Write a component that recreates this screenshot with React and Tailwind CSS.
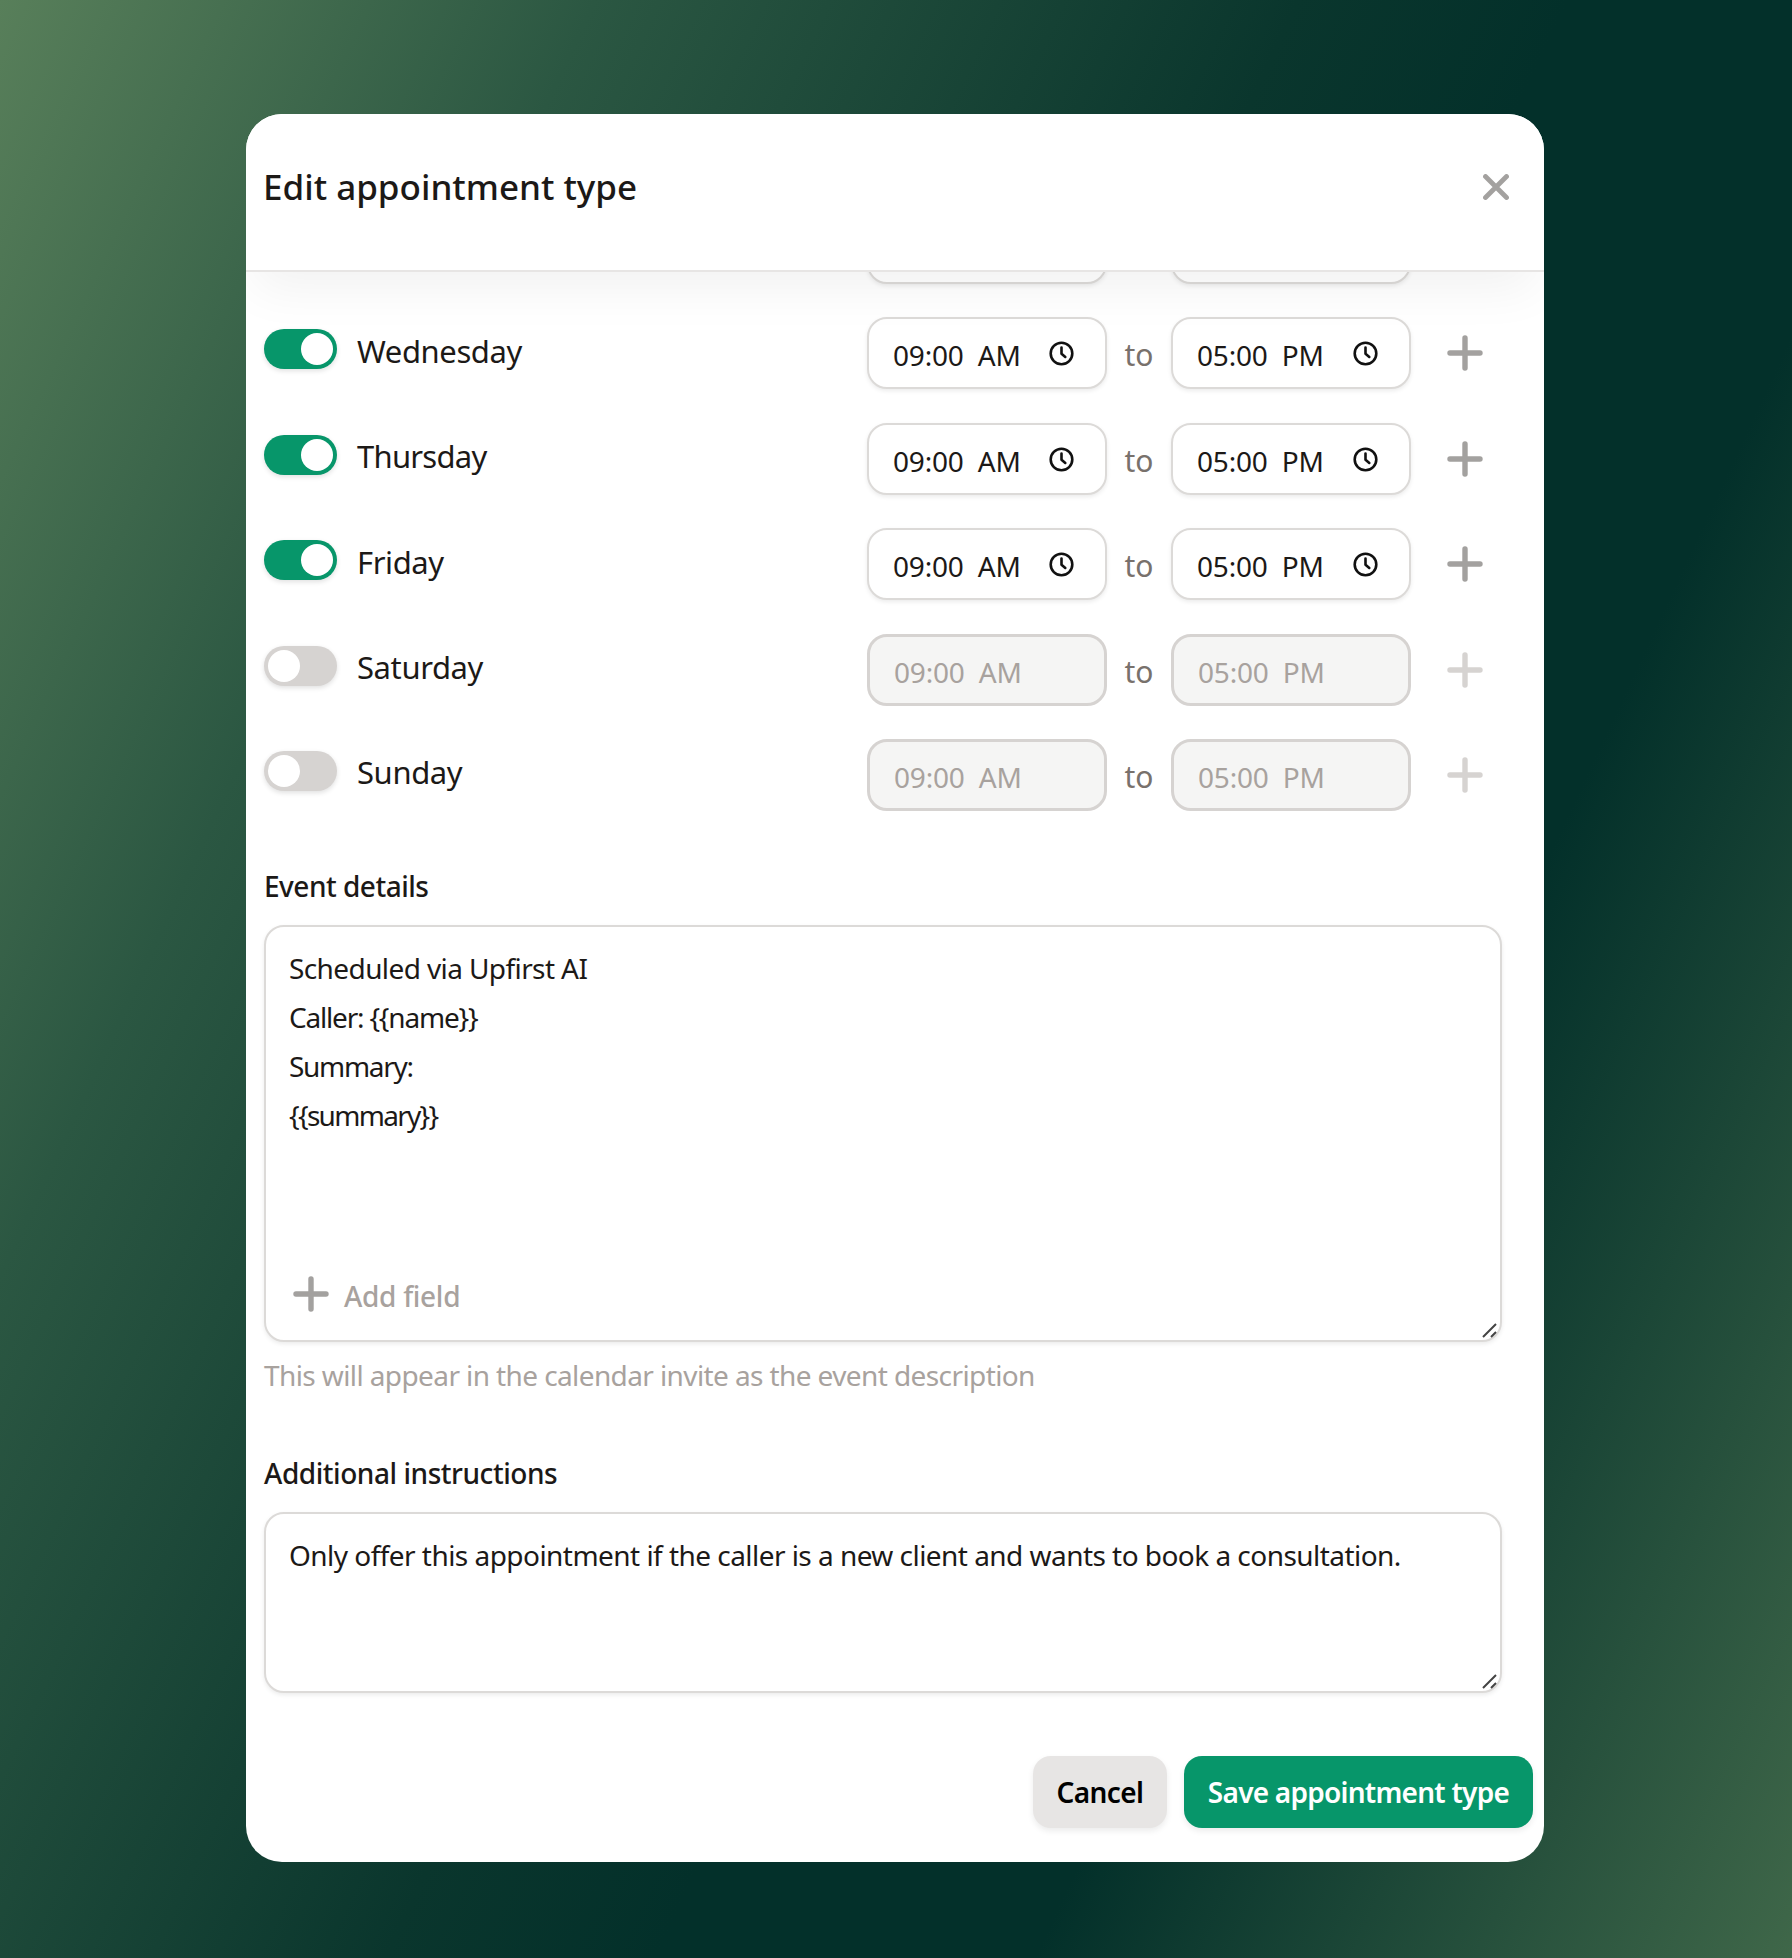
import React from "react";

function Toggle({ on }) {
  return (
    <div
      className={
        "mb-[8px] flex h-[40px] w-[73px] shrink-0 items-center rounded-full p-[4px] shadow-[0_2px_5px_rgba(0,0,0,0.12)] " +
        (on ? "justify-end bg-[#07966a]" : "justify-start bg-[#d6d3d1]")
      }
    >
      <div className="h-[32px] w-[32px] rounded-full bg-white" />
    </div>
  );
}

function Clock() {
  return (
    <svg viewBox="0 0 25 25" className="absolute right-[31px] top-[22px] h-[25px] w-[25px]" fill="none" stroke="#111" strokeWidth="2.6" strokeLinecap="round" strokeLinejoin="round">
      <circle cx="12.5" cy="12.5" r="10.8" />
      <path d="M12.5 6.5v6.2l3.8 3.2" />
    </svg>
  );
}

function Plus({ color, className }) {
  return (
    <svg viewBox="0 0 36 36" className={className} fill="none" stroke={color} strokeWidth="5.4" strokeLinecap="round">
      <path d="M18 3v30M3 18h30" />
    </svg>
  );
}

function TimeField({ text, disabled, bare }) {
  return (
    <div
      className={
        "relative flex h-[72px] w-[240px] shrink-0 items-center rounded-[20px] pl-[24px] pt-[4px] text-[28px] tracking-[-0.2px] " +
        (disabled
          ? "border-[3px] border-[#d6d3d1] bg-[#f5f5f4] pl-[23px] text-[#a8a29e]"
          : "border-2 border-[#dcdad8] bg-white text-[#1c1917] shadow-[0_2px_4px_rgba(0,0,0,0.08)]")
      }
    >
      {!bare && <span className="whitespace-pre">{text}</span>}
      {!disabled && !bare && <Clock />}
    </div>
  );
}

function DayRow({ day, on, bare, labelClass = "tracking-[-0.4px]" }) {
  return (
    <div className="flex h-[72px] items-center">
      <div className="flex w-[603px] items-center gap-[20px]">
        <Toggle on={on} />
        {!bare && <span className={"mb-[4px] text-[31px] leading-none text-[#1c1917] " + labelClass}>{day}</span>}
      </div>
      <TimeField text="09:00  AM" disabled={!on} bare={bare} />
      <span className="w-[64px] pt-[3px] text-center text-[30px] text-[#78716c]">{bare ? "" : "to"}</span>
      <TimeField text="05:00  PM" disabled={!on} bare={bare} />
      <Plus color={on ? "#a3a19f" : "#d6d3d1"} className="ml-[36px] h-[36px] w-[36px]" />
    </div>
  );
}

function Grip() {
  return (
    <svg viewBox="0 0 16 16" className="absolute bottom-[2px] right-[2px] h-[16px] w-[16px]" fill="none" stroke="#444" strokeWidth="2">
      <path d="M1 15 14 2M9 15l5-5" />
    </svg>
  );
}

export default function App() {
  return (
    <div
      className="flex h-[1958px] w-full items-start justify-center bg-[linear-gradient(115deg,#587f5a_0%,#2b5742_22%,#0a362d_48%,#03302a_58%,#03302a_72%,#3f6749_100%)] pr-[2px] pt-[114px] text-[#1c1917]"
      style={{ fontFamily: '"Noto Sans", "Open Sans", sans-serif' }}
    >
      <div className="flex h-[1748px] w-[1298px] flex-col overflow-hidden rounded-[36px] bg-white">
        <header className="relative z-10 flex h-[158px] shrink-0 items-center justify-between border-b-2 border-[#e7e5e4] bg-white pb-[10px] pl-[17px] pr-[35px] shadow-[0_25px_50px_-8px_rgba(0,0,0,0.055)]">
          <h1 className="text-[35px] font-medium text-[#1c1917]">Edit appointment type</h1>
          <svg viewBox="0 0 26 26" className="h-[26px] w-[26px]" fill="none" stroke="#a3a19f" strokeWidth="4.8" strokeLinecap="round">
            <path d="M2.5 2.5l21 21M23.5 2.5l-21 21" />
          </svg>
        </header>

        <main className="flex-1 overflow-hidden pl-[18px] pr-[42px]">
          <div className="-mt-[60px] flex flex-col gap-[33.4px]">
            <DayRow day="" on bare />
            <DayRow day="Wednesday" on />
            <DayRow day="Thursday" on labelClass="tracking-[-0.75px]" />
            <DayRow day="Friday" on />
            <DayRow day="Saturday" />
            <DayRow day="Sunday" />
          </div>

          <h2 className="mt-[55.5px] text-[28px] font-medium leading-[40px] tracking-[-0.5px]">Event details</h2>
          <div className="relative mt-[18.5px] flex h-[417px] w-[1238px] flex-col rounded-[20px] border-2 border-[#dcdad8] bg-white pl-[23px] pt-[17.5px] shadow-[0_2px_4px_rgba(0,0,0,0.08)]">
            <div className="text-[28px] leading-[48.7px] tracking-[-0.6px]">
              <div>Scheduled via Upfirst AI</div>
              <div className="tracking-[-1.2px]">Caller: {"{{name}}"}</div>
              <div className="tracking-[-1.3px]">Summary:</div>
              <div className="tracking-[-1.7px]">{"{{summary}}"}</div>
            </div>
            <div className="mt-[136px] flex items-center gap-[15px]">
              <Plus color="#a3a19f" className="mb-[4px] ml-[4px] h-[36px] w-[36px]" />
              <span className="text-[28px] font-medium tracking-[-0.3px] text-[#a8a29e]">Add field</span>
            </div>
            <Grip />
          </div>
          <p className="mt-[13px] text-[28px] leading-[40px] tracking-[-0.6px] text-[#a8a29e]">
            This will appear in the calendar invite as the event description
          </p>

          <h2 className="mt-[58px] text-[28px] font-medium leading-[40px] tracking-[-0.45px]">Additional instructions</h2>
          <div className="relative mt-[19px] h-[181px] w-[1238px] rounded-[20px] border-2 border-[#dcdad8] bg-white pl-[23px] pt-[17px] shadow-[0_2px_4px_rgba(0,0,0,0.08)]">
            <div className="text-[28px] leading-[48.7px] tracking-[-0.54px]">
              Only offer this appointment if the caller is a new client and wants to book a consultation.
            </div>
            <Grip />
          </div>
        </main>

        <footer className="flex h-[106px] shrink-0 items-start justify-end gap-[17px] pr-[11px]">
          <button className="h-[72px] w-[134px] rounded-[18px] bg-[#e7e5e4] text-[28px] font-semibold tracking-[-0.6px] text-black shadow-[0_3px_6px_rgba(0,0,0,0.08)]">Cancel</button>
          <button className="h-[72px] w-[349px] rounded-[18px] bg-[#07966a] text-[28px] font-semibold tracking-[-0.75px] text-white shadow-[0_3px_6px_rgba(0,0,0,0.08)]">Save appointment type</button>
        </footer>
      </div>
    </div>
  );
}
